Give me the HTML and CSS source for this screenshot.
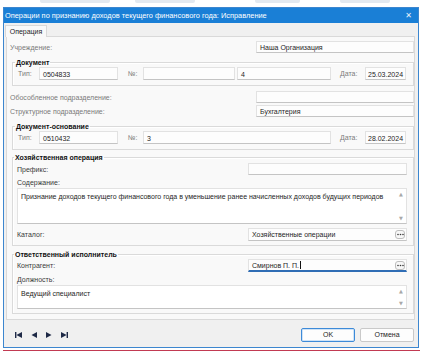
FILE: index.html
```html
<!DOCTYPE html>
<html lang="ru">
<head>
    <meta charset="UTF-8">
    <meta name="viewport" content="width=device-width, initial-scale=1.0">
    <title>Операции по признанию доходов</title>
    <link rel="stylesheet" href="styles.css">
</head>
<body>
    <div class="backdrop">
        <span class="ghost g1"></span>
        <span class="ghost g2"></span>
        <span class="ghost g3"></span>
        <span class="ghost g4"></span>
    </div>

    <div class="window">
        <div class="titlebar">
            <span class="title">Операции по признанию доходов текущего финансового года: Исправление</span>
            <span class="close">✕</span>
        </div>

        <div class="window-body">
            <div class="tabs">
                <div class="tab">Операция</div>
            </div>

            <div class="panel">
                <div class="row row-org">
                    <span class="label">Учреждение:</span>
                    <div class="field side">Наша Организация</div>
                </div>

                <fieldset class="group group-doc">
                    <legend>Документ</legend>
                    <div class="doc-row">
                        <span class="label l-type">Тип:</span>
                        <div class="field f-type">0504833</div>
                        <span class="label l-num">№:</span>
                        <div class="field f-series"></div>
                        <div class="field f-num">4</div>
                        <span class="label l-date">Дата:</span>
                        <div class="field f-date">25.03.2024</div>
                    </div>
                </fieldset>

                <div class="row row-sep">
                    <span class="label">Обособленное подразделение:</span>
                    <div class="field side"></div>
                </div>
                <div class="row row-dept">
                    <span class="label">Структурное подразделение:</span>
                    <div class="field side">Бухгалтерия</div>
                </div>

                <fieldset class="group group-base">
                    <legend>Документ-основание</legend>
                    <div class="doc-row">
                        <span class="label l-type">Тип:</span>
                        <div class="field f-type">0510432</div>
                        <span class="label l-num">№:</span>
                        <div class="field f-num-wide">3</div>
                        <span class="label l-date">Дата:</span>
                        <div class="field f-date">28.02.2024</div>
                    </div>
                </fieldset>

                <fieldset class="group group-op">
                    <legend>Хозяйственная операция</legend>
                    <div class="row row-prefix">
                        <span class="label dark">Префикс:</span>
                        <div class="field side-in"></div>
                    </div>
                    <div class="caption">Содержание:</div>
                    <div class="memo memo-content">
                        <div class="memo-text">Признание доходов текущего финансового года в уменьшение ранее начисленных доходов будущих периодов</div>
                        <div class="scroll"><span>▲</span><span>▼</span></div>
                    </div>
                    <div class="row row-catalog">
                        <span class="label dark">Каталог:</span>
                        <div class="field side-in picker">
                            <span>Хозяйственные операции</span>
                            <span class="dots"><svg width="7" height="3" viewBox="0 0 7 3"><circle cx="1" cy="1.5" r="0.8"/><circle cx="3.5" cy="1.5" r="0.8"/><circle cx="6" cy="1.5" r="0.8"/></svg></span>
                        </div>
                    </div>
                </fieldset>

                <fieldset class="group group-person">
                    <legend>Ответственный исполнитель</legend>
                    <div class="row row-agent">
                        <span class="label dark">Контрагент:</span>
                        <div class="field side-in picker focused">
                            <span>Смирнов П. П.<span class="caret"></span></span>
                            <span class="dots"><svg width="7" height="3" viewBox="0 0 7 3"><circle cx="1" cy="1.5" r="0.8"/><circle cx="3.5" cy="1.5" r="0.8"/><circle cx="6" cy="1.5" r="0.8"/></svg></span>
                        </div>
                    </div>
                    <div class="caption">Должность:</div>
                    <div class="memo memo-post">
                        <div class="memo-text">Ведущий специалист</div>
                        <div class="scroll"><span>▲</span><span>▼</span></div>
                    </div>
                </fieldset>
            </div>

            <div class="footer">
                <div class="nav">
                    <svg width="7" height="6" viewBox="0 0 7 6"><rect x="0" y="0" width="1.4" height="6"/><polygon points="1.4,3 7,0 7,6"/></svg>
                    <svg width="6" height="6" viewBox="0 0 6 6"><polygon points="0.5,3 6,0 6,6"/></svg>
                    <svg width="6" height="6" viewBox="0 0 6 6"><polygon points="5.5,3 0,0 0,6"/></svg>
                    <svg width="7" height="6" viewBox="0 0 7 6"><polygon points="5.6,3 0,0 0,6"/><rect x="5.6" y="0" width="1.4" height="6"/></svg>
                </div>
                <div class="buttons">
                    <button class="btn btn-default">OK</button>
                    <button class="btn">Отмена</button>
                </div>
            </div>
        </div>
    </div>

    <div class="edge"></div>
</body>
</html>
```

FILE: styles.css
```css
:root {
    --accent: #1a7fd6;
    --window-border: #3c86cf;
    --window-bg: #f0f0f0;
    --panel-bg: #f9f9f9;
    --line: #d9d9d9;
    --field-border: #e2e2e2;
    --field-shadow: #c4c4c4;
    --label: #7a7a7a;
    --text: #1e1e1e;
}

* {
    margin: 0;
    padding: 0;
    box-sizing: border-box;
}

body {
    width: 429px;
    height: 355px;
    overflow: hidden;
    background: #fff;
    color: var(--text);
    font-family: "Liberation Sans", Arial, sans-serif;
    font-size: 7px;
    line-height: 1;
}

/* blurred page behind the dialog */
.backdrop {
    height: 7px;
    display: flex;
    align-items: flex-start;
    padding-left: 40px;
}

.ghost {
    height: 3px;
    border-radius: 0 0 2px 2px;
    background: #e3e9f0;
}

.g1 { width: 70px; }
.g2 { width: 60px; margin-left: 25px; }
.g3 { width: 45px; margin-left: 60px; }
.g4 { width: 50px; margin-left: 40px; }

.window {
    margin-left: 3px;
    width: 416px;
    height: 341px;
    border: 1px solid var(--window-border);
    background: var(--window-bg);
    display: flex;
    flex-direction: column;
}

.titlebar {
    height: 15px;
    background: var(--accent);
    color: #fff;
    display: flex;
    align-items: center;
    justify-content: space-between;
    padding: 0 6px 0 1px;
    flex-shrink: 0;
}

.title {
    font-size: 7.4px;
}

.close {
    font-family: "DejaVu Sans", sans-serif;
    font-size: 8px;
    color: #e8f1fb;
}

.window-body {
    flex: 1;
    display: flex;
    flex-direction: column;
    padding: 0 3px 0 2px;
}

.tabs {
    height: 13px;
    display: flex;
    align-items: flex-end;
    flex-shrink: 0;
}

.tab {
    width: 42px;
    height: 12px;
    margin-left: -1px;
    margin-bottom: -1px;
    background: var(--panel-bg);
    border: 1px solid var(--line);
    border-bottom: none;
    display: flex;
    align-items: center;
    justify-content: center;
    position: relative;
    z-index: 1;
}

.panel {
    height: 284px;
    background: var(--panel-bg);
    border: 1px solid var(--line);
    padding: 4px 0 0 3px;
    display: flex;
    flex-direction: column;
}

.row {
    display: flex;
    align-items: center;
    justify-content: space-between;
}

.label {
    color: var(--label);
    white-space: nowrap;
}

.label.dark,
.caption {
    color: #3a3a3a;
}

.field {
    height: 12px;
    line-height: 12px;
    padding-left: 3px;
    background: #fdfdfd;
    border: 1px solid var(--field-border);
    border-bottom-color: var(--field-shadow);
    white-space: nowrap;
    overflow: hidden;
}

.side {
    width: 158px;
}

.side-in {
    width: 159px;
}

.row-sep {
    margin-top: 5px;
}

.row-dept {
    margin-top: 2px;
}

/* group boxes */
.group {
    margin-left: 2px;
    border: 1px solid #dadada;
    box-shadow: inset 1px 1px 0 #fff;
    padding: 0 5px 5px 5px;
    min-width: 0;
}

.group legend {
    font-weight: bold;
    color: #111;
    padding: 0 1px;
    margin-left: -3px;
    line-height: 9px;
}

.group-doc {
    margin-top: 5px;
}

.group-base {
    margin-top: 5px;
}

.group-op {
    margin-top: 3px;
    padding: 0 6px 4px 4px;
}

.group-person {
    margin-top: 4px;
    padding: 0 6px 4px 4px;
}

.doc-row {
    display: flex;
    align-items: center;
}

.doc-row .field {
    height: 13px;
    line-height: 13px;
}

.l-type { width: 21px; }
.f-type { width: 79px; }
.l-num { width: 15px; margin-left: 10px; }
.f-series { width: 92px; }
.f-num { width: 94px; margin-left: 2px; }
.f-num-wide { width: 188px; }
.l-date { width: 25px; margin-left: 9px; }
.f-date { width: 41px; padding-left: 2px; }

.row-prefix {
    margin-top: 1px;
}

.caption {
    height: 10px;
    line-height: 10px;
    margin-top: 3px;
}

.memo {
    display: flex;
    background: #fff;
    border: 1px solid var(--field-border);
    border-bottom-color: var(--field-shadow);
}

.memo-content {
    height: 36px;
}

.memo-post {
    height: 24px;
}

.memo-text {
    flex: 1;
    padding: 3px 3px 0;
    line-height: 9px;
}

.scroll {
    width: 10px;
    display: flex;
    flex-direction: column;
    justify-content: space-between;
    align-items: center;
    padding: 3px 0 2px;
    color: #a8a8a8;
    font-family: "DejaVu Sans", sans-serif;
    font-size: 5px;
}

.row-catalog {
    margin-top: 4px;
}

.row-catalog .field,
.row-agent .field {
    height: 13px;
    line-height: 13px;
}

.picker {
    display: flex;
    justify-content: space-between;
    align-items: center;
    padding-right: 1px;
}

.dots {
    width: 10px;
    height: 9px;
    display: flex;
    align-items: center;
    justify-content: center;
    border: 1px solid #bdbdbd;
    border-radius: 3px;
    background: #f7f7f7;
    fill: #3a3a3a;
}

.focused {
    border-bottom: 2px solid #2f6db5;
}

.caret {
    display: inline-block;
    width: 1px;
    height: 8px;
    margin-left: 1px;
    background: #111;
    vertical-align: -1px;
}

/* footer */
.footer {
    flex: 1;
    display: flex;
    align-items: center;
    justify-content: space-between;
    padding: 2px 1px 0 9px;
}

.nav {
    display: flex;
    gap: 9px;
    align-items: center;
    fill: #1f2a47;
}

.buttons {
    display: flex;
    gap: 5px;
}

.btn {
    width: 54px;
    height: 14px;
    font-family: "Liberation Sans", Arial, sans-serif;
    font-size: 7px;
    color: #1e1e1e;
    background: #fdfdfd;
    border: 1px solid #c9c9c9;
    border-radius: 2px;
}

.btn-default {
    border-color: #3d8ad8;
    box-shadow: inset 0 0 0 1px #cfe3f7;
}

.edge {
    margin: 2px 0 0 3px;
    width: 417px;
    height: 1px;
    background: #c23a52;
}
```
